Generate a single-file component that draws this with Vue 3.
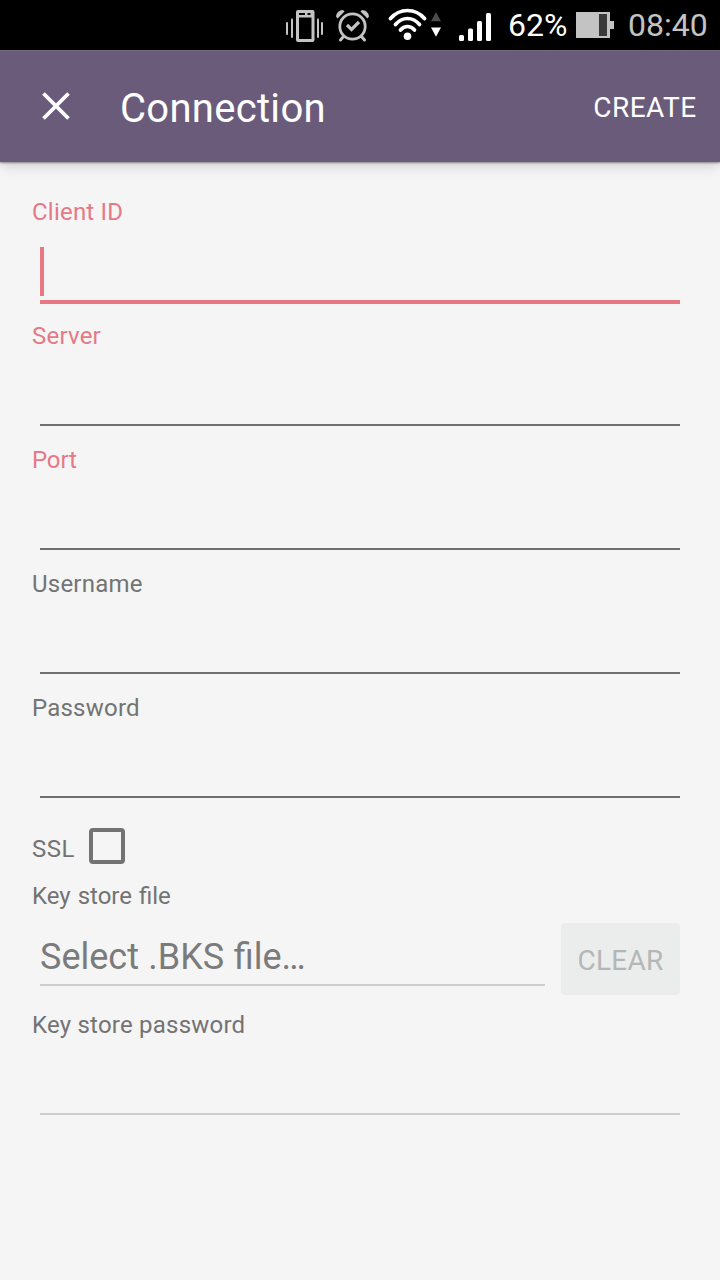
<script setup>
const fields = [
  { label: 'Client ID', required: true, focused: true },
  { label: 'Server', required: true },
  { label: 'Port', required: true, tight: true },
  { label: 'Username' },
  { label: 'Password' },
]
</script>

<template>
  <div class="screen">
    <header class="status">
      <svg class="vibrate" width="38" height="34" viewBox="0 0 38 34">
        <g fill="#c3c3c3">
          <rect x="0" y="13" width="2" height="13" rx="1" />
          <rect x="5" y="9.500" width="2" height="19.500" rx="1" />
          <rect x="31" y="9.500" width="2" height="19.500" rx="1" />
          <rect x="35" y="13" width="2" height="13" rx="1" />
          <path fill-rule="evenodd" d="M12 1h14.500q2 0 2 2v28q0 2-2 2H12q-2 0-2-2V3q0-2 2-2ZM13 8.500v21.500h12.500V8.500ZM13 4v2h6V4ZM21.500 4v2H24.500V4Z" />
        </g>
      </svg>
      <svg class="alarm" width="34" height="34" viewBox="0 0 34 34" fill="none" stroke="#c3c3c3" stroke-linecap="round">
        <circle cx="16.500" cy="17.500" r="12.700" stroke-width="2.800" />
        <path d="M11 16l4.500 4.500 7.500-7.500" stroke-width="3.200" stroke-linecap="butt" />
        <path d="M7.500 27.500l-3 3.500M25.500 27.500l3 3.500" stroke-width="3" />
        <path d="M0 7.500Q1 1 7 1L8.500 2.500 1.500 9.500ZM33 7.500Q32 1 26 1L24.500 2.500 31.500 9.500Z" fill="#c3c3c3" stroke="none" />
      </svg>
      <svg class="wifi" width="54" height="36" viewBox="0 0 54 36" fill="none" stroke="#fff" stroke-width="3.700" stroke-linecap="round">
        <path d="M2.500 10.500Q9.500 2.500 19.500 2.500T36.500 10.500" />
        <path d="M7.500 16.500Q12.500 10.500 19.500 10.500T31.500 16.500" />
        <path d="M12.500 22Q15.500 18.500 19.500 18.500T26.500 22" />
        <circle cx="19.500" cy="28.200" r="3.800" fill="#fff" stroke="none" />
        <path d="M43 13.200h10L48 4.200Z" fill="#4c4c4c" stroke="none" />
        <path d="M43 19.500h10L48 28.700Z" fill="#fff" stroke="none" />
      </svg>
      <svg class="signal" width="34" height="30" viewBox="0 0 34 30" fill="#fff">
        <rect x="0" y="23" width="5" height="6" rx="1.500" />
        <rect x="9" y="16.500" width="5" height="12.500" rx="1.500" />
        <rect x="18" y="9" width="5" height="20" rx="1.500" />
        <rect x="27" y="1" width="5" height="28" rx="1.500" />
      </svg>
      <span class="percent">62%</span>
      <svg class="battery" width="38" height="26" viewBox="0 0 38 26">
        <path d="M0 0h34v9h4v8h-4v9H0Z" fill="#c3c3c3" />
        <rect x="23" y="2" width="8" height="22" fill="#3a3a3a" />
      </svg>
      <span class="clock">08:40</span>
    </header>

    <nav class="toolbar">
      <svg class="close" width="28" height="28" viewBox="0 0 28 28" fill="none" stroke="#fff" stroke-width="3.800">
        <path d="M1.500 1.500l25 25M26.500 1.500l-25 25" />
      </svg>
      <h1>Connection</h1>
      <button class="create">CREATE</button>
    </nav>

    <main class="form">
      <div v-for="f in fields" :key="f.label" class="field" :class="{ required: f.required, focused: f.focused, tight: f.tight }">
        <label>{{ f.label }}</label>
        <div class="input"><i v-if="f.focused" class="caret"></i></div>
      </div>
      <div class="ssl">
        <label>SSL</label>
        <span class="checkbox"></span>
      </div>
      <label class="ligatures">Key store file</label>
      <div class="file-row">
        <div class="file">Select .BKS file…</div>
        <button class="clear" disabled>CLEAR</button>
      </div>
      <label>Key store password</label>
      <div class="input disabled"></div>
    </main>
  </div>
</template>

<style>
body {
  margin: 0;
  background: #f5f5f5;
}
</style>

<style scoped>
.screen {
  width: 720px;
  height: 1280px;
  overflow: hidden;
  background: #f5f5f5;
  font-family: Roboto, sans-serif;
}
.screen * {
  box-sizing: border-box;
}
svg {
  display: block;
  flex: none;
}
button {
  border: 0;
  padding: 0;
  background: none;
  font: inherit;
}
.status {
  display: flex;
  align-items: flex-start;
  height: 50px;
  padding-left: 286px;
  background: #000;
  font-size: 32px;
  line-height: 38px;
  white-space: nowrap;
}
.vibrate { margin-top: 9px; }
.alarm { margin: 9px 0 0 12px; }
.wifi { margin: 8px 0 0 18px; }
.signal { margin: 12px 0 0 17px; }
.percent {
  width: 83px;
  margin-top: 6px;
  padding-left: 15px;
  color: #fff;
}
.battery { margin-top: 12px; }
.clock {
  margin: 6px 0 0 14px;
  color: #c3c3c3;
}
.toolbar {
  position: relative;
  display: flex;
  align-items: center;
  height: 112px;
  padding: 0 23.5px 0 42px;
  background: #6b5b7b;
  border-top: 1px solid #75697f;
  box-shadow: 0 1px 2px rgba(0, 0, 0, 0.4), 0 4px 12px rgba(0, 0, 0, 0.15);
  color: #fff;
}
.close {
  margin-bottom: 2px;
}
h1 {
  margin: 4px 0 0 50px;
  font-size: 40px;
  font-weight: 400;
  line-height: 48px;
  letter-spacing: 0.3px;
}
.create {
  margin: 2px 0 0 auto;
  color: #fff;
  font-size: 28px;
  line-height: 34px;
  letter-spacing: 0.45px;
}
.form {
  padding: 36px 40px 0 32px;
}
label {
  display: block;
  color: #737373;
  font-size: 24px;
  line-height: 28px;
  letter-spacing: 0.22px;
}
.tight label {
  letter-spacing: -0.15px;
}
.ligatures {
  letter-spacing: normal;
  word-spacing: 1px;
}
.field {
  height: 124px;
}
.required label {
  color: #e57986;
}
.input {
  height: 76px;
  margin-left: 8px;
  border-bottom: 2px solid #6f6f6f;
}
.focused .input {
  height: 78px;
  padding-top: 21px;
  border-bottom: 4px solid #e97683;
}
.caret {
  display: block;
  width: 4px;
  height: 49px;
  background: #e97683;
}
.ssl {
  display: flex;
  gap: 14px;
  height: 64px;
  padding-top: 10px;
}
.ssl label {
  width: 43px;
  margin-top: 7px;
  letter-spacing: 0.5px;
}
.checkbox {
  width: 36px;
  height: 36px;
  border: 4px solid #737373;
  border-radius: 4px;
}
.file-row {
  display: flex;
  gap: 16px;
  height: 88px;
  padding-top: 13px;
  margin: 0 0 13px 8px;
}
.file {
  flex: 1;
  height: 63px;
  padding-top: 13px;
  border-bottom: 2px solid #cdcdcd;
  color: #7b7b7b;
  font-size: 36px;
  line-height: 42px;
  word-spacing: 0.5px;
}
.clear {
  width: 119px;
  height: 72px;
  padding-top: 2px;
  border-radius: 4px;
  background: #ebeded;
  color: #b5b6b6;
  font-size: 28px;
  letter-spacing: 0.3px;
}
.input.disabled {
  border-color: #cdcdcd;
}
</style>
